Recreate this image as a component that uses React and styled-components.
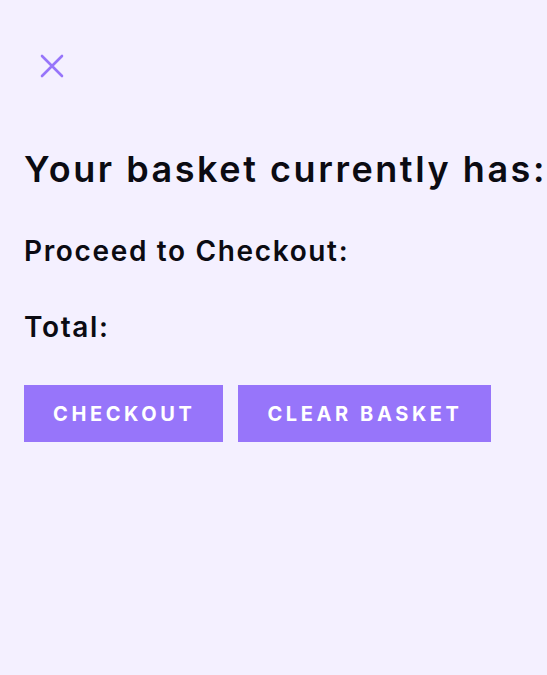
import React from 'react';
import styled, { createGlobalStyle } from 'styled-components';

const GlobalStyle = createGlobalStyle`
  html, body {
    margin: 0;
    padding: 0;
    background: #f4f0ff;
  }
  body {
    font-family: Inter, "Noto Sans", sans-serif;
    color: #0b0b12;
  }
`;

const Panel = styled.div`
  min-height: 675px;
  box-sizing: border-box;
  padding: 40px 0 24px 24px;
  background: #f4f0ff;
  overflow: hidden;
`;

const CloseButton = styled.button`
  display: flex;
  align-items: center;
  justify-content: center;
  width: 56px;
  height: 52px;
  padding: 0;
  border: none;
  background: transparent;
  color: #9775fa;
  cursor: pointer;
`;

const Title = styled.h1`
  margin: 55px 0 0;
  font-size: 36px;
  font-weight: 600;
  line-height: 44px;
  letter-spacing: 2.55px;
  white-space: nowrap;
`;

const Line = styled.p`
  margin: ${(p) => p.$top}px 0 0;
  font-size: 28px;
  font-weight: 600;
  line-height: 34px;
  letter-spacing: 1.65px;
`;

const Actions = styled.div`
  display: flex;
  gap: 15px;
  margin-top: 41px;
`;

const Button = styled.button`
  height: 57px;
  padding: 0 28px 0 29px;
  border: none;
  background: #9775fa;
  color: #fff;
  font-family: inherit;
  font-size: 20px;
  font-weight: 700;
  letter-spacing: 3.6px;
  text-transform: uppercase;
  cursor: pointer;
`;

export default function App() {
  return (
    <>
      <GlobalStyle />
      <Panel>
        <CloseButton aria-label="Close">
          <svg width="24" height="24" viewBox="0 0 24 24" fill="none" stroke="currentColor" strokeWidth="2.6" strokeLinecap="round">
            <path d="M2 2 L22 22 M22 2 L2 22" />
          </svg>
        </CloseButton>
        <Title>Your basket currently has:</Title>
        <Line $top={43}>Proceed to Checkout:</Line>
        <Line $top={42}>Total:</Line>
        <Actions>
          <Button>Checkout</Button>
          <Button>Clear Basket</Button>
        </Actions>
      </Panel>
    </>
  );
}
